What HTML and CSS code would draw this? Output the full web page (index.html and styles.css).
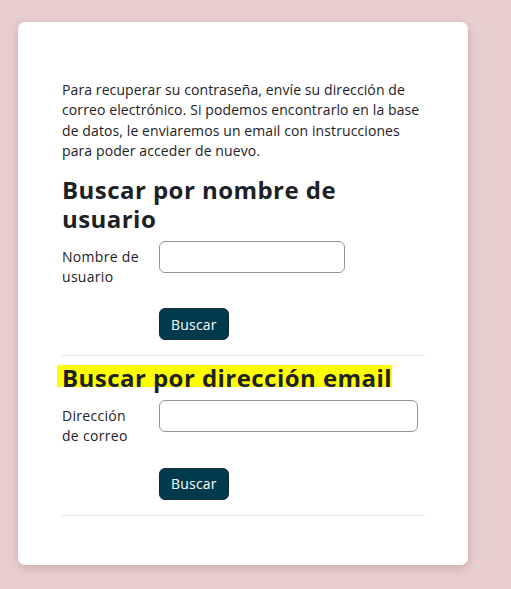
FILE: index.html
```html
<!DOCTYPE html>
<html lang="es">
<head>
<meta charset="utf-8">
<title>Recuperar contraseña</title>
<link rel="stylesheet" href="styles.css">
</head>
<body>
<main class="card">
  <p class="intro">Para recuperar su contraseña, envíe su dirección de correo electrónico. Si podemos encontrarlo en la base de datos, le enviaremos un email con instrucciones para poder acceder de nuevo.</p>

  <section class="search">
    <h3 class="title">Buscar por nombre de usuario</h3>
    <div class="row">
      <label class="label" for="u">Nombre de usuario</label>
      <input class="field field-short" id="u" type="text">
    </div>
    <div class="actions">
      <button class="btn" type="button">Buscar</button>
    </div>
  </section>

  <section class="search">
    <h3 class="title"><span class="mark">Buscar por dirección email</span></h3>
    <div class="row">
      <label class="label" for="e">Dirección de correo</label>
      <input class="field field-long" id="e" type="text">
    </div>
    <div class="actions">
      <button class="btn" type="button">Buscar</button>
    </div>
  </section>
</main>
</body>
</html>
```
FILE: styles.css
```css
html, body {
  margin: 0;
  padding: 0;
}
body {
  background: #e8cfcf;
  font-family: "Open Sans", "Liberation Sans", sans-serif;
  color: #1d2125;
  min-height: 589px;
}
.card {
  box-sizing: border-box;
  margin: 22px 0 0 18px;
  width: 450px;
  background: #fff;
  border-radius: 7px;
  box-shadow: 0 3px 10px rgba(150, 100, 100, 0.35);
  padding: 58px 43px 49px 44px;
}
.intro {
  margin: 0 0 15px;
  font-size: 14px;
  line-height: 20.3px;
  letter-spacing: 0.1px;
}
.search {
  border-bottom: 1px solid #dee2e6;
  padding-bottom: 15px;
}
.search + .search {
  margin-top: 8px;
}
.title {
  margin: 0 0 7px;
  font-size: 24px;
  line-height: 28.8px;
  font-weight: 700;
  letter-spacing: 0.45px;
}
.mark {
  background: linear-gradient(to bottom, transparent 12%, #ffff00 12%, #ffff00 80%, transparent 80%);
  padding: 0 0 0 5px;
  margin-left: -5px;
}
.row {
  display: flex;
  align-items: flex-start;
  margin-bottom: 21px;
}
.label {
  width: 80px;
  margin-right: 17px;
  padding-top: 6px;
  font-size: 14px;
  line-height: 20.3px;
  letter-spacing: 0.3px;
}
.field {
  box-sizing: border-box;
  height: 32px;
  border: 1px solid #8f959e;
  border-radius: 6px;
  background: #fff;
}
.field-short { width: 186px; }
.field-long { width: 259px; }
.actions {
  padding-left: 97px;
}
.btn {
  height: 32px;
  padding: 0 11px;
  border: 1px solid #0b2e38;
  border-radius: 6px;
  background: #003a4c;
  color: #fff;
  font-family: inherit;
  font-size: 14px;
  letter-spacing: 0.2px;
}
```
